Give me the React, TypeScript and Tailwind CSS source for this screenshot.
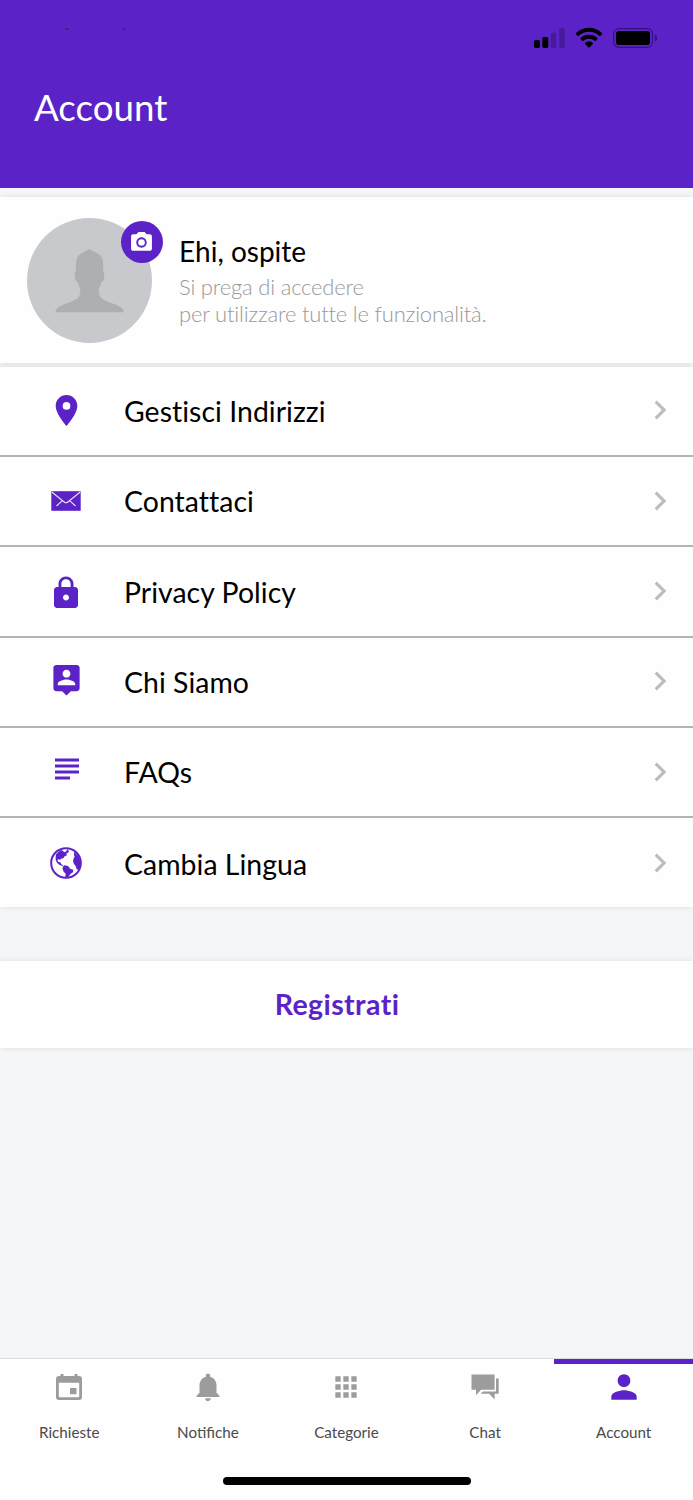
import type { ReactNode } from "react";
import {
  MdApps,
  MdChevronRight,
  MdLocationOn,
  MdLock,
  MdNotifications,
  MdPerson,
  MdPhotoCamera,
  MdSubject,
} from "react-icons/md";

function StatusBar() {
  return (
    <div className="flex h-[75px] items-start justify-between pl-[65px] pr-[36px] pt-[26px]">
      {/* Remains of the clock */}
      <div className="flex w-[61px] justify-between pt-[2px]">
        <span className="h-[2px] w-[4px] rounded-full bg-[#472082]" />
        <span className="h-[2px] w-[3px] rounded-full bg-[#472082]" />
      </div>
      <div className="flex items-start">
        <svg className="mt-[2px] h-[20px] w-[31px]" viewBox="0 0 31 20">
          <rect x="0" y="12" width="6" height="8" rx="1.7" />
          <rect x="8.3" y="9" width="6" height="11" rx="1.7" />
          <rect x="16.8" y="4.5" width="5.5" height="15.5" rx="1.7" fill="#471a9c" />
          <rect x="25.2" y="0" width="5.5" height="20" rx="1.7" fill="#471a9c" />
        </svg>
        <svg className="ml-[10.5px] mt-px h-[21px] w-[28px]" viewBox="0 0 28 21">
          <path d="M14 .8c5 0 9.6 2 13 5.1.4.4.4.9 0 1.3l-1.500 1.500c-.4.4-.9.4-1.300 0A15 15 0 0 0 14 4.800 15 15 0 0 0 3.800 8.700c-.4.4-.9.4-1.300 0L1 7.200c-.4-.4-.4-.9 0-1.300C4.400 2.800 9 .8 14 .8Z" />
          <path d="M14 7.800c3.200 0 6.100 1.200 8.300 3.200.4.400.4.900 0 1.300l-1.500 1.500c-.4.400-.9.400-1.300 0A8.300 8.300 0 0 0 14 11.800c-2.100 0-4 .7-5.500 2-.4.400-.9.400-1.300 0l-1.500-1.500c-.4-.4-.4-.9 0-1.300A12.400 12.400 0 0 1 14 7.800Z" />
          <path d="M14 14.600c1.500 0 2.800.5 3.800 1.300.4.300.4.800 0 1.200l-3.100 3.200c-.4.400-1 .4-1.400 0l-3.100-3.200c-.4-.4-.4-.9 0-1.200 1-.8 2.300-1.300 3.800-1.300Z" />
        </svg>
        <svg className="ml-[10px] mt-[2px] h-[20px] w-[44px]" viewBox="0 0 44 20">
          <rect x=".7" y=".6" width="38.8" height="18.8" rx="5.2" fill="none" stroke="#35137a" strokeWidth="1.2" />
          <rect x="3" y="3" width="34" height="14" rx="2.8" />
          <path d="M42 6.500c1.300.6 2.100 2 2.100 3.500s-.8 2.900-2.100 3.500Z" fill="#35137a" />
        </svg>
      </div>
    </div>
  );
}

function Avatar() {
  return (
    <div className="relative mt-px h-[125px] w-[125px] shrink-0 rounded-full bg-[#c8c9cd]">
      <svg className="h-full w-full" viewBox="0 0 125 125" fill="#aeafb3">
        <path d="M62.300 31c3 2.500 7.500 3 10.700 6 2.400 2.300 3.200 5.500 3.200 10v6c1.200.7 1.300 3 1 5.700-.3 3.300-1 5-2.900 5.300-.5 2.800-1.400 5-2.400 6.500-.2 3.500.2 6 1.200 8.300 2.700 3.200 8 4.800 13 7 6.600 2.300 10.500 4.500 10.500 8.500H28.500c0-4 4-6.200 10.500-8.500 5-2.200 10.300-3.800 13-7 1-2.300 1.400-4.800 1.200-8.300-1-1.500-1.900-3.700-2.400-6.500-1.900-.3-2.600-2-2.900-5.300-.3-2.700-.2-5 1-5.700v-6c0-4.500 1-7.700 3.200-10 3-3 7.200-3.500 10.200-6Z" />
      </svg>
      <span className="absolute left-[93.500px] top-[3px] flex h-[42px] w-[42px] items-center justify-center rounded-full bg-[#5b23c7]">
        <MdPhotoCamera className="h-[25px] w-[25px] text-white" />
      </span>
    </div>
  );
}

const MailIcon = () => (
  <svg className="h-[20px] w-[30px]" viewBox="0 0 30 20">
    <path d="M.3.200h29.400v19.600H.3Z" fill="#5b23c7" />
    <path
      d="M.8 1 13.500 11.200q1.500 1.200 3 0L29.200 1M5.500 15l5.900-5.400M24.500 15l-5.900-5.400"
      fill="none"
      stroke="#e9e1fa"
      strokeWidth="1.1"
    />
  </svg>
);

const AboutIcon = () => (
  <svg className="mb-[4px] h-[35px] w-[35px]" viewBox="0 0 24 24" fill="currentColor">
    <path d="M19 2H5c-1.100 0-2 .9-2 2v14c0 1.100.9 2 2 2h4l3 3 3-3h4c1.100 0 2-.9 2-2V4c0-1.100-.9-2-2-2Zm-7 3.300c1.500 0 2.700 1.200 2.700 2.700s-1.200 2.700-2.700 2.700S9.300 9.500 9.300 8s1.200-2.700 2.700-2.700ZM18 16H6v-.9c0-2 4-3.100 6-3.100s6 1.100 6 3.100Z" />
  </svg>
);

const GlobeIcon = () => (
  <svg className="h-[32px] w-[32px]" viewBox="0 0 96 96" fill="#5b23c7">
    <circle cx="48" cy="48" r="44.500" fill="none" stroke="#5b23c7" strokeWidth="6" />
    {/* North America */}
    <path d="M18 22 32 9l7 2 3 5 7-3 3-6 5 5-3 6-5 1 2 6-7 3-4 6-7 1-3 4-4-3-4 4 3 5 6 1 3 6 6 3-2 2-9-3-8-7-4-8V29Z" />
    {/* South America */}
    <path d="m38 60 5-5 9 1 5 4 3 5 10 3-1 8-7 4-5 7-6 5-5-1 1-11-6-6-3-7Z" />
    {/* Africa and Europe */}
    <path d="m72 14 14 14 6 17-1 15-6 8-5-1-3-10-5-6-3-8 2-9 3-5-2-6Z" />
  </svg>
);

const CalendarIcon = () => (
  <svg className="h-[26px] w-[26px]" viewBox="0 0 26 26" fill="currentColor">
    <path
      fillRule="evenodd"
      d="M4.500 0h3v2h11V0h3v2H23a3 3 0 0 1 3 3v18a3 3 0 0 1-3 3H3a3 3 0 0 1-3-3V5a3 3 0 0 1 3-3h1.500ZM2.800 8.800v13.400a1 1 0 0 0 1 1h18.400a1 1 0 0 0 1-1V8.800Z"
    />
    <path d="M14 14h6.500v6.200H14Z" />
  </svg>
);

const ChatIcon = () => (
  <svg className="h-[26px] w-[28px]" viewBox="0 0 28 26" fill="currentColor">
    <path d="M.5.500H23.600V15.800H10L5 21.300V15.800H.5Z" />
    <path d="M25 4.500h2.700v15.200H23.700v5.800L18 19.700H9.700L11.800 17.500H25Z" />
  </svg>
);

const menuItems: { label: string; icon: ReactNode }[] = [
  { label: "Gestisci Indirizzi", icon: <MdLocationOn className="h-[37px] w-[37px]" /> },
  { label: "Contattaci", icon: <MailIcon /> },
  { label: "Privacy Policy", icon: <MdLock className="mt-[3px] h-[36px] w-[36px]" /> },
  { label: "Chi Siamo", icon: <AboutIcon /> },
  { label: "FAQs", icon: <MdSubject className="mb-[7px] ml-px h-[36px] w-[36px]" /> },
  { label: "Cambia Lingua", icon: <GlobeIcon /> },
];

const tabs: { label: string; icon: ReactNode; active?: boolean }[] = [
  { label: "Richieste", icon: <CalendarIcon /> },
  { label: "Notifiche", icon: <MdNotifications className="h-[34px] w-[34px]" /> },
  { label: "Categorie", icon: <MdApps className="h-[32px] w-[32px]" /> },
  { label: "Chat", icon: <ChatIcon /> },
  { label: "Account", icon: <MdPerson className="h-[38px] w-[38px]" />, active: true },
];

export default function App() {
  return (
    <main className="flex h-[1500px] w-[693px] flex-col overflow-hidden bg-[#f5f6f8] font-['Lato',sans-serif] text-black">
      <header className="h-[187.500px] shrink-0 bg-[#5b23c7]">
        <StatusBar />
        <h1 className="pl-[34px] text-[36.700px] leading-[64px] text-white">Account</h1>
      </header>

      <section className="mt-[9.500px] flex h-[166px] shrink-0 items-center bg-[#fefefe] pl-[27px] shadow-[0_0_6px_rgba(0,0,0,0.1)]">
        <Avatar />
        <div className="mb-[4px] ml-[27px] [font-variant-ligatures:none]">
          <h2 className="text-[28px] leading-[44px]">Ehi, ospite</h2>
          <p className="text-[22px] font-light leading-[27px] tracking-[-0.2px] text-[#999999]">
            Si prega di accedere
            <br />
            per utilizzare tutte le funzionalità.
          </p>
        </div>
      </section>

      <ul className="mt-[3.700px] h-[540.500px] shrink-0 bg-[#fefefe] shadow-[0_0_6px_rgba(0,0,0,0.1)]">
        {menuItems.map((item) => (
          <li
            key={item.label}
            className="flex h-[90.300px] items-center border-b-2 border-[#b4b4b4] pr-[14.500px] last:border-b-0"
          >
            <span className="flex w-[124px] justify-center pl-[8px] text-[#5b23c7]">{item.icon}</span>
            <span className="flex-1 pt-px text-[28.400px] tracking-[0.05px] [font-variant-ligatures:none]">
              {item.label}
            </span>
            <MdChevronRight className="mb-px h-[38px] w-[38px] text-[#bdbdbd]" />
          </li>
        ))}
      </ul>

      <button className="mt-[53.500px] h-[87px] shrink-0 bg-[#fefefe] pr-[19px] text-[28.500px] font-bold tracking-[0.4px] text-[#5b23c7] shadow-[0_0_6px_rgba(0,0,0,0.1)] [font-variant-ligatures:none]">
        Registrati
      </button>

      <footer className="mt-auto flex h-[142px] shrink-0 flex-col border-t border-[#dcdcde] bg-[#fefefe]">
        <nav className="grid grid-cols-5">
          {tabs.map((tab) => (
            <div
              key={tab.label}
              className={`flex h-[90px] flex-col items-center border-t-[5px] ${
                tab.active ? "border-[#5b23c7] text-[#5b23c7]" : "border-transparent text-[#9c9c9c]"
              }`}
            >
              <span className="flex h-[45px] items-center">{tab.icon}</span>
              <span className="mt-[12px] text-[15.200px] leading-[22px] text-[#4a4a4a]">{tab.label}</span>
            </div>
          ))}
        </nav>
        <div className="mx-auto mt-[28px] h-[8px] w-[248px] rounded-full bg-black" />
      </footer>
    </main>
  );
}
